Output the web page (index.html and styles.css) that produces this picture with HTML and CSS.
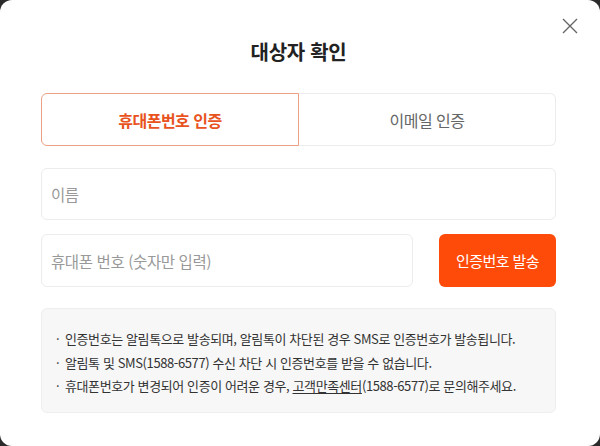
FILE: index.html
```html
<!DOCTYPE html>
<html lang="ko">
<head>
<meta charset="utf-8">
<link rel="stylesheet" href="styles.css">
</head>
<body>
<div class="modal">
  <button class="close" aria-label="닫기">
    <svg width="16" height="16" viewBox="0 0 16 16"><path d="M1 1 L15 15 M15 1 L1 15" stroke="#666" stroke-width="1.4" fill="none"/></svg>
  </button>
  <h1 class="title">대상자 확인</h1>
  <div class="tabs">
    <div class="tab active">휴대폰번호 인증</div>
    <div class="tab">이메일 인증</div>
  </div>
  <div class="field">
    <div class="input">이름</div>
  </div>
  <div class="row">
    <div class="input grow">휴대폰 번호 (숫자만 입력)</div>
    <button class="send">인증번호 발송</button>
  </div>
  <ul class="info">
    <li>인증번호는 알림톡으로 발송되며, 알림톡이 차단된 경우 SMS로 인증번호가 발송됩니다.</li>
    <li>알림톡 및 SMS(1588-6577) 수신 차단 시 인증번호를 받을 수 없습니다.</li>
    <li>휴대폰번호가 변경되어 인증이 어려운 경우, <u>고객만족센터</u>(1588-6577)로 문의해주세요.</li>
  </ul>
</div>
</body>
</html>
```
FILE: styles.css
```css
html, body {
  margin: 0;
  padding: 0;
  background: #2b2b2b;
}
body {
  font-family: "Noto Sans CJK KR", "Noto Sans", sans-serif;
  color: #222;
}
.modal {
  position: relative;
  box-sizing: border-box;
  width: 600px;
  height: 446px;
  background: #fff;
  border-radius: 12px;
  padding: 38px 44px 0 41px;
}
.close {
  position: absolute;
  top: 18px;
  right: 22px;
  width: 16px;
  height: 16px;
  padding: 0;
  border: 0;
  background: none;
  display: flex;
}
.title {
  margin: 0;
  text-align: center;
  font-size: 20px;
  line-height: 28px;
  font-weight: 700;
  letter-spacing: -0.3px;
  color: #222;
}
.tabs {
  margin-top: 27px;
  display: flex;
  height: 53px;
}
.tab {
  flex: 1;
  display: flex;
  align-items: center;
  justify-content: center;
  font-size: 16px;
  letter-spacing: -0.5px;
  color: #666;
  border: 1px solid #ececec;
  border-left: 0;
  border-radius: 0 6px 6px 0;
}
.tab.active {
  color: #e8531e;
  font-weight: 700;
  border: 1px solid #eba282;
  border-radius: 6px 0 0 6px;
}
.field {
  margin-top: 22px;
}
.input {
  box-sizing: border-box;
  height: 52px;
  border: 1px solid #ececec;
  border-radius: 6px;
  padding-left: 9px;
  display: flex;
  align-items: center;
  font-size: 15.5px;
  letter-spacing: -0.4px;
  color: #999;
}
.row {
  margin-top: 14px;
  display: flex;
  gap: 26px;
}
.row .input {
  height: 53px;
}
.grow {
  flex: 1;
}
.send {
  width: 117px;
  height: 53px;
  border: 0;
  border-radius: 6px;
  background: #ff4b0a;
  color: #fff;
  font-family: inherit;
  font-size: 15px;
  letter-spacing: -0.6px;
  padding: 0;
}
.info {
  margin: 21px 0 0;
  box-sizing: border-box;
  height: 105px;
  list-style: none;
  padding: 18px 10px 0 14px;
  background: #f7f7f7;
  border: 1px solid #eeeeee;
  border-radius: 6px;
  font-size: 13px;
  line-height: 23.5px;
  letter-spacing: -0.4px;
  color: #333;
}
.info li {
  position: relative;
  padding-left: 9px;
  white-space: nowrap;
}
.info li::before {
  content: "·";
  position: absolute;
  left: 0;
  top: 0;
}
.info u {
  text-underline-offset: 2px;
}
```
